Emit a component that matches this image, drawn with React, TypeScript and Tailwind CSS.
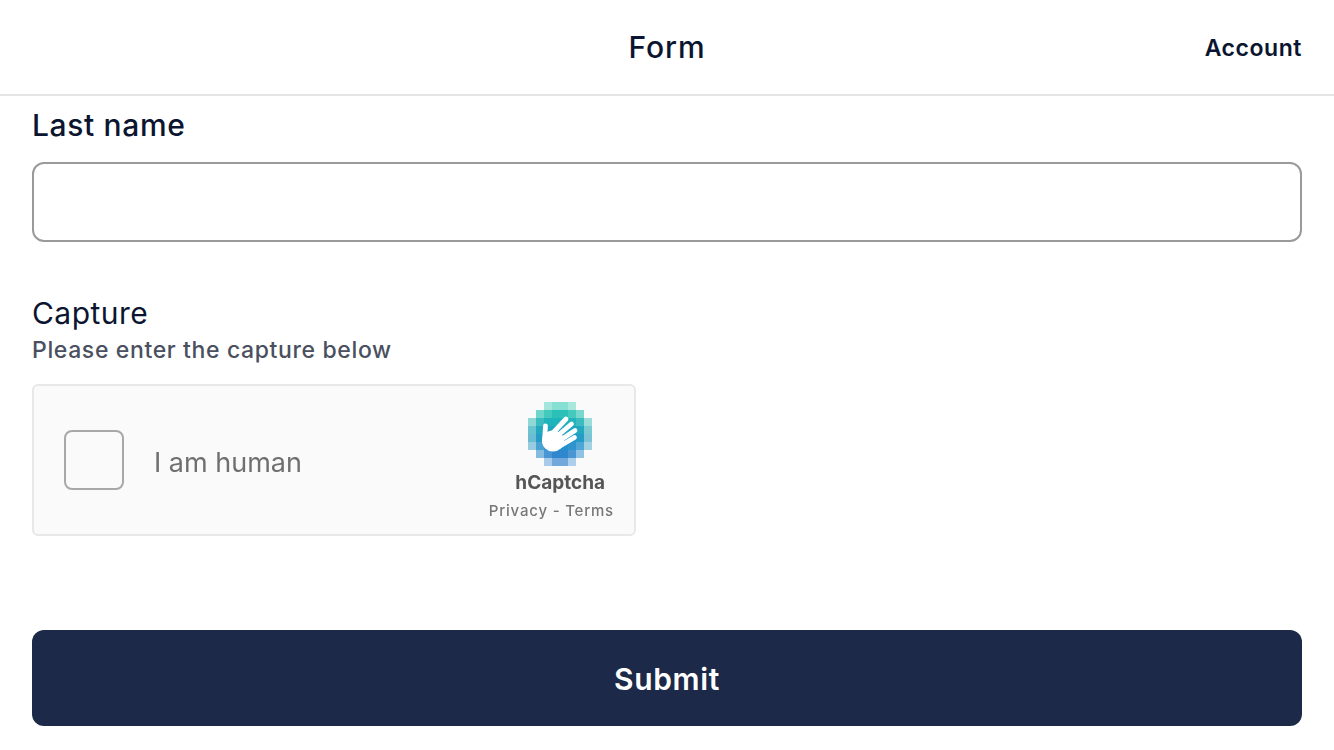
import React from 'react';

const logoRows = [
  { y: 402, cells: [[544, '#a5e6dc'], [552, '#85dfd2'], [560, '#85dfd2'], [568, '#a9e7dd']] },
  { y: 410, cells: [[536, '#6fd6ca'], [544, '#44c9bd'], [552, '#2cc1b8'], [560, '#2cc1b8'], [568, '#44c9bd'], [576, '#78d8cd']] },
  { y: 418, cells: [[528, '#8fd8d6'], [536, '#3cbcc0'], [544, '#1fb3bc'], [552, '#1fb3bc'], [560, '#1fb3bc'], [568, '#1fb3bc'], [576, '#3cbcc0'], [584, '#9adcd8']] },
  { y: 426, cells: [[528, '#6cc4d0'], [536, '#22a9c0'], [544, '#1fa6c0'], [552, '#1fa6c0'], [560, '#1fa6c0'], [568, '#1fa6c0'], [576, '#22a9c0'], [584, '#7ccbd3']] },
  { y: 434, cells: [[528, '#6cbcd4'], [536, '#259cc6'], [544, '#1f9bc6'], [552, '#1f9bc6'], [560, '#1f9bc6'], [568, '#1f9bc6'], [576, '#259cc6'], [584, '#7dc3d7']] },
  { y: 442, cells: [[528, '#97cbe0'], [536, '#4aa2d2'], [544, '#2f93ce'], [552, '#2490cd'], [560, '#2490cd'], [568, '#2f93ce'], [576, '#4fa6d4'], [584, '#a2d2e2']] },
  { y: 450, cells: [[536, '#86bbe0'], [544, '#4a95d3'], [552, '#2f88cd'], [560, '#2f88cd'], [568, '#4a95d3'], [576, '#90c2e3']] },
  { y: 458, cells: [[544, '#a9cbea'], [552, '#73a8dc'], [560, '#73a8dc'], [568, '#aecfeb']] },
] as const;

function HCaptchaLogo() {
  return (
    <svg width="64" height="64" viewBox="528 402 64 64" className="block">
      {logoRows.map(row =>
        row.cells.map(([x, color]) => (
          <rect key={`${row.y}-${x}`} x={x} y={row.y} width="8" height="8" fill={color} />
        ))
      )}
      <ellipse cx="553" cy="441" rx="11" ry="10.5" fill="#ffffff" />
      <g stroke="#ffffff" strokeWidth="4.8" strokeLinecap="round" fill="none">
        <path d="M544.5 440 L545.5 426" />
        <path d="M552 434 L566 419" />
        <path d="M556 437 L571.5 424" />
        <path d="M559 441 L575 430.5" />
        <path d="M560 446 L574.5 437.5" />
      </g>
    </svg>
  );
}

export default function App() {
  return (
    <div className="w-[1334px] h-[750px] overflow-hidden bg-white font-['Inter',sans-serif] text-[#0b1530]">
      <header className="h-[96px] border-b-2 border-[#e5e5e5] flex items-center justify-between px-8">
        <div className="w-[110px]" />
        <h1 className="text-[30px] font-medium leading-none tracking-[0.9px]">Form</h1>
        <button className="w-[110px] text-right text-[23px] font-semibold leading-none pt-[2px] tracking-[0.55px]">Account</button>
      </header>

      <main className="px-8 flex flex-col">
        <label className="mt-[11px] text-[30px] font-medium leading-[36px] tracking-[0.65px]">Last name</label>
        <input className="mt-[19px] h-[80px] w-full rounded-[12px] border-2 border-[#9a9a9a] bg-white" />

        <label className="mt-[53px] text-[30px] leading-[36px] tracking-[0.45px]">Capture</label>
        <p className="mt-[3px] text-[23px] font-medium leading-[32px] tracking-[0.63px] text-[#4a5060]">Please enter the capture below</p>

        <div className="mt-[18px] h-[152px] w-[604px] rounded-[6px] border-2 border-[#e8e8e8] bg-[#fafafa] flex items-center justify-between">
          <div className="flex items-center blur-[0.6px]">
            <div className="ml-[30px] h-[60px] w-[60px] rounded-[8px] border-2 border-[#a8a8a8] bg-[#fafafa]" />
            <span className="ml-[30px] pt-[4px] text-[27px] text-[#6f6f6f] leading-none">I am human</span>
          </div>
          <div className="mr-[20px] pt-[3px] flex flex-col items-end blur-[0.6px]">
            <div className="mr-[22px]">
              <HCaptchaLogo />
            </div>
            <span className="mr-[9px] mt-[6px] text-[19px] font-bold text-[#555555] leading-[22px]">hCaptcha</span>
            <span className="mt-[7px] text-[15px] font-medium tracking-[0.8px] text-[#777777] leading-[20px]">Privacy - Terms</span>
          </div>
        </div>

        <button className="mt-[94px] h-[96px] w-full rounded-[12px] bg-[#1c2948] text-white text-[30px] font-semibold pt-[2px] tracking-[0.65px]">Submit</button>
      </main>
    </div>
  );
}
